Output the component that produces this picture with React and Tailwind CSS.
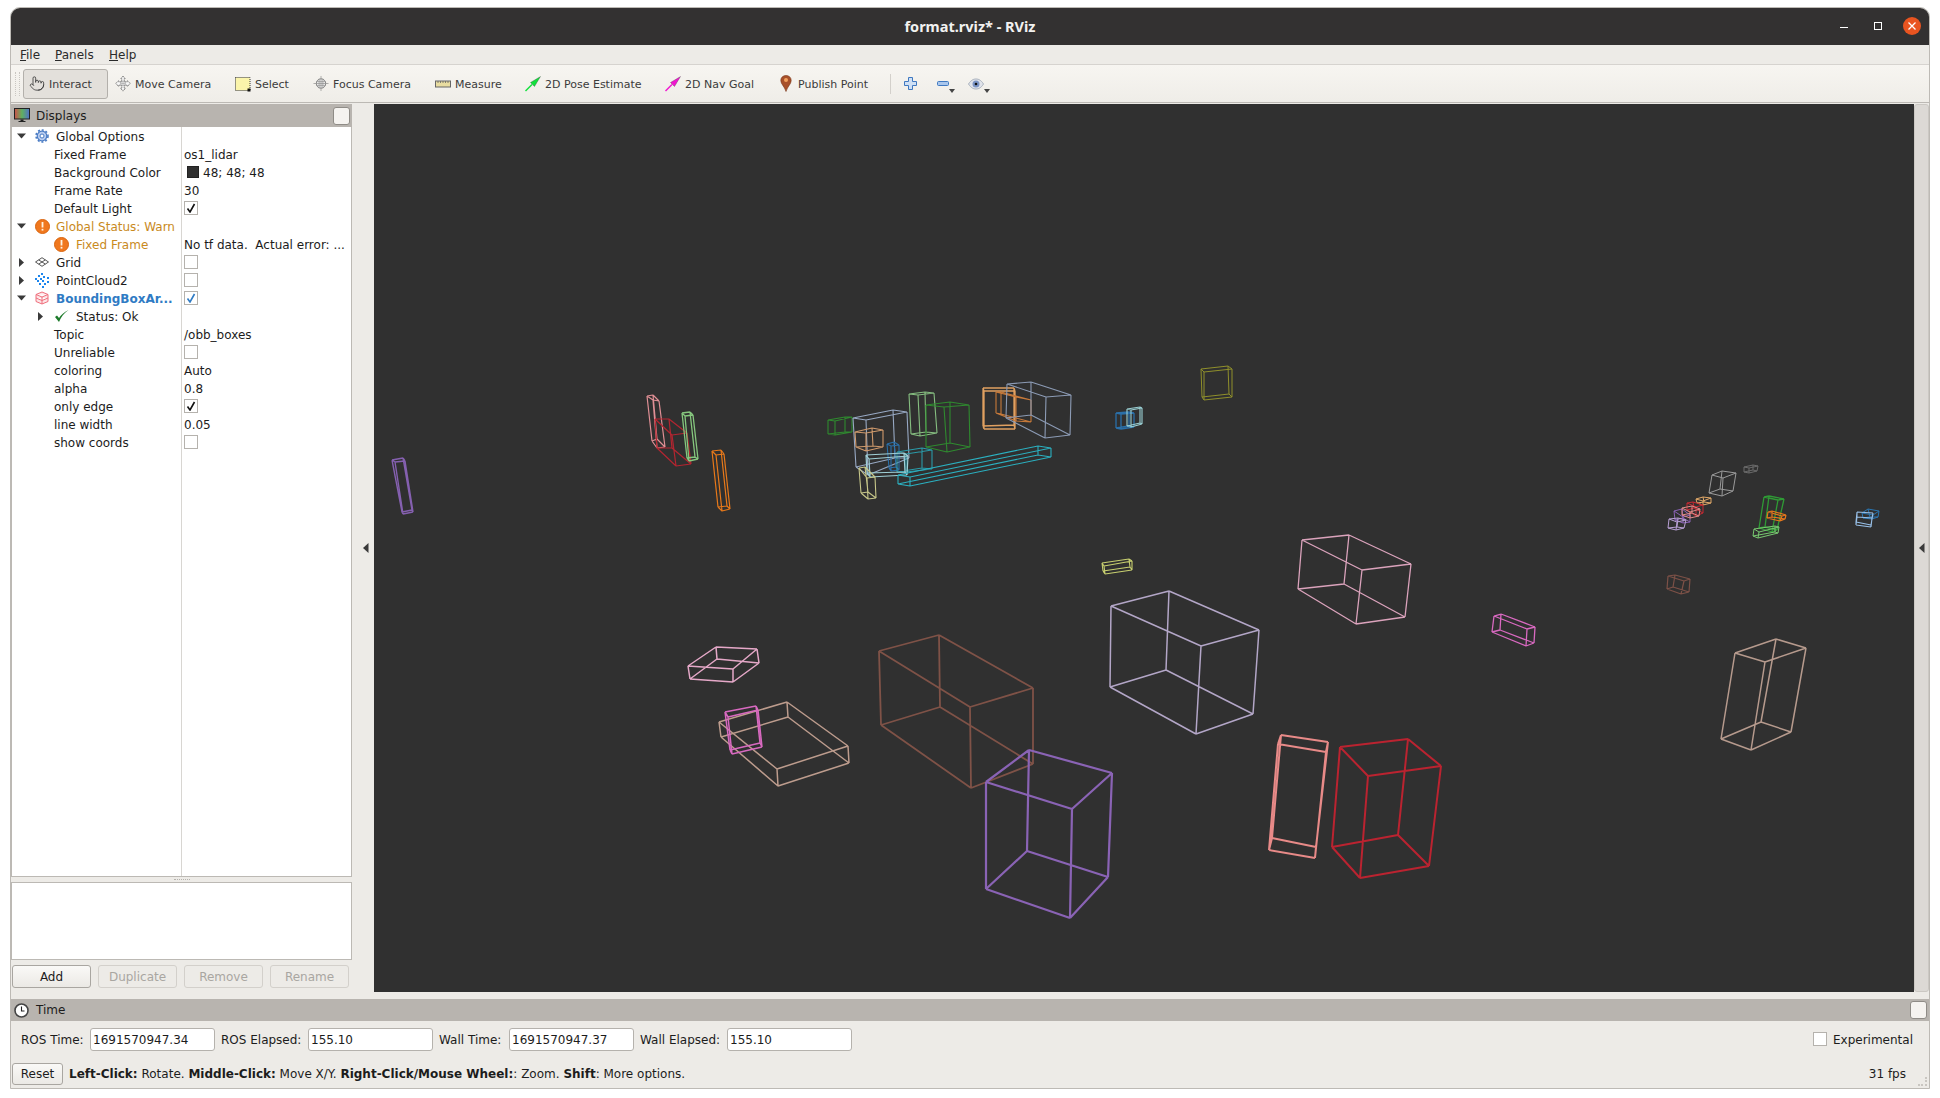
import { Pointer } from "lucide-react";

// wireframe boxes: colour, stroke, then top face and bottom face corners in page coordinates
const boxes = [
  ["#7f5247", 1.8, [879,651,939,635,1033,688,970,707], [881,725,940,707,1033,764,971,788]],
  ["#8a63b5", 2.2, [986,782,1029,750,1112,773,1072,809], [986,889,1027,851,1108,877,1070,918]],
  ["#b3a6c7", 1.5, [1111,606,1169,591,1259,630,1201,646], [1110,687,1166,670,1253,714,1196,734]],
  ["#e88a88", 2, [1281,735,1328,742,1326,752,1278,744], [1272,838,1316,847,1315,858,1269,850]],
  ["#bb2330", 2, [1340,747,1408,739,1441,766,1368,776], [1332,847,1398,835,1429,866,1360,878]],
  ["#e5a8c8", 1.5, [716,647,757,649,733,669,688,666], [717,659,759,663,733,682,690,679]],
  ["#bd9c8d", 1.5, [719,722,787,702,848,746,777,769], [721,737,788,717,849,763,778,786]],
  ["#d869c0", 1.5, [725,712,756,706,758,710,728,717], [730,750,760,743,762,747,732,754]],
  ["#dba3bc", 1.3, [1302,540,1349,535,1411,564,1362,570], [1298,589,1344,584,1405,617,1356,624]],
  ["#d869c0", 1.3, [1494,616,1501,614,1535,627,1527,629], [1492,632,1500,630,1534,643,1526,646]],
  ["#7d5147", 1.2, [1668,576,1675,575,1690,579,1684,581], [1667,589,1673,587,1689,592,1681,594]],
  ["#b69a8d", 1.5, [1735,653,1776,639,1806,648,1765,662], [1721,739,1761,722,1791,732,1751,750]],
  ["#e08f95", 1.2, [647,396,653,395,659,401,653,400], [652,441,657,439,665,447,657,448]],
  ["#b32530", 1.2, [655,419,669,419,687,433,672,435], [657,448,672,448,691,464,676,466]],
  ["#86c77e", 1.3, [682,413,690,412,693,415,685,416], [687,458,695,457,698,459,689,461]],
  ["#e8791a", 1.2, [712,451,721,450,724,454,716,455], [718,507,727,506,730,509,722,511]],
  ["#8560b0", 1.4, [392,460,403,458,405,461,395,462], [402,512,412,510,413,512,403,514]],
  ["#2f8a2f", 1.1, [828,420,845,417,852,417,835,421], [828,434,845,432,852,432,835,435]],
  ["#98a9c4", 1.1, [853,418,893,410,907,412,866,420], [856,467,895,458,909,458,868,475]],
  ["#d09a6c", 1.1, [855,432,872,428,883,430,866,433], [856,447,873,446,883,447,866,451]],
  ["#2a6fa8", 1.1, [887,444,894,442,899,445,891,446], [889,468,896,467,899,470,891,471]],
  ["#2b9aa8", 1.1, [897,452,922,448,932,450,906,454], [897,472,922,468,932,469,906,472]],
  ["#9fd0d6", 1.2, [866,455,904,453,908,456,869,459], [867,473,905,472,907,475,870,477]],
  ["#2bb0c0", 1.1, [898,475,1038,446,1051,448,910,477], [898,484,1038,455,1051,457,910,486]],
  ["#c8c88a", 1.1, [859,468,865,467,875,477,867,478], [861,493,868,492,876,498,868,499]],
  ["#86be80", 1.1, [909,394,925,392,934,393,918,395], [911,434,926,432,937,433,920,436]],
  ["#2f8a2f", 1.1, [926,405,950,402,969,405,944,407], [926,447,950,443,970,447,947,452]],
  ["#e0a060", 1.3, [983,388,1014,388,1015,391,984,391], [983,426,1014,425,1015,429,984,429]],
  ["#c87a3a", 1.1, [996,392,1001,392,1031,400,1016,397], [996,413,1001,414,1031,422,1016,421]],
  ["#8c9bb5", 1.1, [1007,384,1031,382,1071,395,1046,397], [1006,418,1031,415,1070,435,1045,438]],
  ["#2a6fa8", 1.3, [1116,413,1129,412,1134,413,1121,414], [1116,428,1129,426,1134,427,1121,429]],
  ["#9ad0d4", 1.1, [1127,409,1140,407,1142,408,1131,410], [1127,426,1140,423,1142,424,1131,427]],
  ["#8f8f2b", 1, [1201,369,1228,366,1232,369,1204,372], [1202,397,1229,394,1232,397,1204,400]],
  ["#c8d070", 1.1, [1102,563,1129,559,1132,561,1104,566], [1103,571,1130,567,1132,570,1105,574]],
  ["#9a9a9a", 1, [1712,475,1722,471,1736,473,1723,478], [1709,493,1720,489,1733,491,1722,496]],
  ["#6a6a6a", 1, [1744,467,1753,465,1758,466,1749,468], [1744,472,1753,470,1757,471,1749,473]],
  ["#e0a868", 1, [1696,499,1703,497,1711,498,1703,501], [1697,503,1704,502,1711,503,1703,505]],
  ["#8a62b5", 1, [1674,511,1682,509,1690,515,1683,517], [1675,520,1683,518,1690,522,1683,523]],
  ["#c62832", 1, [1687,503,1693,502,1703,505,1696,507], [1687,510,1694,508,1703,513,1696,516]],
  ["#e08a88", 1, [1682,508,1692,506,1700,509,1690,512], [1682,515,1692,513,1699,516,1690,518]],
  ["#b8a0d4", 1, [1669,519,1678,518,1686,520,1677,522], [1668,528,1677,527,1684,528,1676,530]],
  ["#2f9a35", 1.3, [1764,497,1769,496,1784,499,1778,500], [1759,528,1765,527,1777,530,1772,532]],
  ["#e8781c", 1.2, [1768,512,1772,511,1786,515,1782,516], [1767,518,1772,517,1785,519,1780,521]],
  ["#78c870", 1, [1754,529,1775,526,1779,527,1759,532], [1753,536,1775,532,1778,533,1758,538]],
  ["#2a75b0", 1, [1862,513,1868,509,1879,511,1873,515], [1863,518,1870,517,1878,517,1872,519]],
  ["#98c0e8", 1.1, [1857,512,1873,513,1872,518,1857,517], [1856,522,1871,525,1871,527,1856,525]],
];

function boxPath([t, b]) {
  const pt = (a, i) => `${a[i * 2]} ${a[i * 2 + 1]}`;
  let d = "";
  for (let i = 0; i < 4; i++) {
    const n = (i + 1) % 4;
    d += `M${pt(t, i)}L${pt(t, n)}M${pt(b, i)}L${pt(b, n)}M${pt(t, i)}L${pt(b, i)}`;
  }
  return d;
}

function Arrow({ open }) {
  if (open) {
    return (
      <svg width="11" height="8" viewBox="0 0 11 8">
        <path d="M1 1.500h9L5.500 6.500z" fill="#3a3a3a" />
      </svg>
    );
  }
  return (
    <svg width="11" height="11" viewBox="0 0 11 11">
      <path d="M3 1v9l5-4.500z" fill="#3a3a3a" />
    </svg>
  );
}

function Check({ blue }) {
  return (
    <div className="w-[14px] h-[14px] -mt-px border border-[#b5b2ad] bg-white flex items-center justify-center">
      {blue !== undefined && (
        <svg width="10" height="10" viewBox="0 0 10 10">
          <path d="M1.500 5.500 4 9 8.500 1" fill="none" stroke={blue ? "#2f7bc4" : "#111"} strokeWidth="1.600" />
        </svg>
      )}
    </div>
  );
}

function WarnIcon() {
  return (
    <svg width="15" height="15" viewBox="0 0 15 15">
      <circle cx="7.500" cy="7.500" r="7" fill="#f0781e" stroke="#d9650f" />
      <rect x="6.600" y="3" width="1.800" height="5.500" fill="#fff3e0" />
      <rect x="6.600" y="9.800" width="1.800" height="1.800" fill="#fff3e0" />
    </svg>
  );
}

function GearIcon() {
  return (
    <svg width="14" height="14" viewBox="0 0 14 14">
      <circle cx="7" cy="7" r="4.800" fill="#b9cdef" stroke="#4a7cc4" strokeWidth="1.200" />
      <circle cx="7" cy="7" r="6" fill="none" stroke="#4a7cc4" strokeWidth="1.600" strokeDasharray="2 1.900" />
      <circle cx="7" cy="7" r="2" fill="#fff" stroke="#4a7cc4" />
    </svg>
  );
}

function GridIcon() {
  return (
    <svg width="14" height="10" viewBox="0 0 14 10">
      <path d="M7 .7 13.500 5 7 9.300.5 5zM3.700 2.900 10.300 7.100M10.300 2.900 3.700 7.100" fill="none" stroke="#555" strokeWidth="1" />
    </svg>
  );
}

function CloudIcon() {
  const dots = [[6,0],[3,2],[8,3],[0,5],[5,5],[12,4],[2,7],[7,7],[12,8],[4,10],[9,10],[7,13]];
  return (
    <svg width="15" height="15" viewBox="0 0 15 15">
      {dots.map(([x, y]) => (
        <rect key={`${x}-${y}`} x={x} y={y} width="2" height="2" fill="#1c86ee" />
      ))}
    </svg>
  );
}

function BoxIcon() {
  return (
    <svg width="14" height="14" viewBox="0 0 14 14">
      <path d="M1 3.500 7 1l6 2.500v7L7 13l-6-2.500zM1 3.500 7 6l6-2.500M7 6v7M1 7l6 2.500L13 7" fill="#fde4e6" stroke="#ef6f7d" strokeWidth="1" />
    </svg>
  );
}

function Row({ name, nameCls = "text-[#1c1c1c]", pad = "pl-[42px]", icon, arrow, children }) {
  return (
    <div className="flex h-[18px]">
      <div className={`w-[170px] flex items-center border-r border-[#d8d6d2] whitespace-nowrap ${pad} ${nameCls}`}>
        {arrow}
        {icon}
        <span className="pt-px">{name}</span>
      </div>
      <div className="flex-1 pl-[2px] pt-px flex items-center whitespace-nowrap text-[#1c1c1c]">{children}</div>
    </div>
  );
}

function Top({ name, open, icon, nameCls, children }) {
  return (
    <Row
      name={name}
      nameCls={nameCls}
      pad="pl-[4px]"
      arrow={<div className="w-[11px] flex items-center justify-center"><Arrow open={open} /></div>}
      icon={<div className="w-[16px] ml-[7px] mr-[6px] flex items-center justify-center">{icon}</div>}
    >
      {children}
    </Row>
  );
}

function ToolButton({ w, label, icon, active }) {
  return (
    <div
      className={`${w} h-[30px] flex items-center gap-[4px] pl-[5px] shrink-0 text-[#3b3b3b] ${
        active ? "bg-[#e3e0db] border border-[#b3b0ab] rounded-[3px]" : ""
      }`}
    >
      <div className="w-[16px] h-[18px] flex items-center justify-center">{icon}</div>
      <span className="pt-[4px]">{label}</span>
    </div>
  );
}

const MoveIcon = (
  <svg width="17" height="17" viewBox="0 0 17 17">
    <path d="M8.500.7 11 3.400H9.800v3.300h3.300V5.500l3.200 3-3.200 3v-1.200H9.800v3.300H11l-2.500 3-2.500-3h1.200v-3.300H3.900v1.200L.7 8.500l3.200-3v1.200h3.300V3.400H6z" fill="#f6f6f6" stroke="#666" strokeWidth=".9" strokeDasharray="1.500 .6" />
    <path d="M6 6.500h5v4H6zM8.500 6.500v4M6 8.500h5" fill="none" stroke="#999" strokeWidth=".6" />
  </svg>
);
const SelectIcon = (
  <svg width="16" height="16" viewBox="0 0 16 16">
    <rect x=".5" y="1.500" width="14.500" height="13" fill="#fbf5ab" stroke="#333" strokeDasharray="1 1" />
    <rect x="12.500" y="12.500" width="3" height="3" fill="#111" />
  </svg>
);
const FocusIcon = (
  <svg width="17" height="17" viewBox="0 0 17 17">
    <circle cx="8.500" cy="8.500" r="5" fill="#f0f0f0" stroke="#777" strokeWidth=".9" />
    <path d="M8.500 .5v16M.5 8.500h16M3.500 6.500h10M3.500 10.500h10M6.500 3.500v10M10.500 3.500v10" fill="none" stroke="#8a8a8a" strokeWidth=".7" />
  </svg>
);
const MeasureIcon = (
  <svg width="16" height="8" viewBox="0 0 16 8">
    <rect x=".5" y="1" width="15" height="6" fill="#e8dca0" stroke="#666" />
    <path d="M3 1v2M5.500 1v2M8 1v2M10.500 1v2M13 1v2" stroke="#666" strokeWidth=".8" />
  </svg>
);
const diag = (c) => (
  <svg width="16" height="16" viewBox="0 0 16 16">
    <path d="M0.500 15 7 8.500" stroke={c} strokeWidth="1.500" />
    <path d="M15.500.5 9.500 10.500 7.500 8.500 5.500 6.500z" fill={c} stroke="#333" strokeWidth=".3" />
  </svg>
);
const PinIcon = (
  <svg width="12" height="17" viewBox="0 0 12 17">
    <path d="M6 .5C2.800.5.800 2.700.8 5.500c0 3.500 3.700 6 5.200 11 1.500-5 5.200-7.500 5.200-11C11.200 2.700 9.200.5 6 .5z" fill="#a8502a" stroke="#7a3a1e" strokeWidth=".6" />
    <circle cx="6" cy="5" r="2" fill="#f3a15e" />
  </svg>
);

function Caret() {
  return <div className="w-0 h-0 border-x-[3.500px] border-x-transparent border-t-[4px] border-t-[#444] self-end mb-[2px]" />;
}

function InlineField({ label, w, value }) {
  return (
    <>
      <span className={w}>{label}</span>
      <div className="w-[125px] h-[23px] mr-[6px] bg-white border border-[#b5b2ad] rounded-[3px] pl-[2px] flex items-center">{value}</div>
    </>
  );
}

function PanelButton({ label, disabled }) {
  return (
    <div
      className={`w-[79px] h-[23px] rounded-[3px] flex items-center justify-center ${
        disabled
          ? "border border-[#d3d0cb] text-[#a9a6a1]"
          : "border border-[#a9a6a1] bg-gradient-to-b from-[#faf9f7] to-[#ebe9e5] text-[#1c1c1c]"
      }`}
    >
      {label}
    </div>
  );
}

function FloatButton() {
  return <div className="w-[17px] h-[18px] bg-[#f5f3f0] border border-[#8f8c87] rounded-[3px]" />;
}

export default function App() {
  return (
    <div className="w-[1940px] h-[1098px] bg-white pt-[7px] pl-[10px] font-['DejaVu_Sans',sans-serif] text-[12px] overflow-hidden">
      <div className="box-border w-[1920px] h-[1082px] flex flex-col rounded-t-[10px] overflow-hidden border-x border-y border-[#bdbab5] bg-[#edebe7]">
        {/* title bar */}
        <div className="relative h-[37px] shrink-0 bg-[#333131] flex items-center justify-center">
          <span className="font-['Noto_Sans',sans-serif] font-bold text-[14.500px] text-[#f2f1f0]">format.rviz* - RViz</span>
          <div className="absolute left-[1829px] top-[19px] w-[8px] h-[1px] bg-white" />
          <div className="absolute left-[1863px] top-[14px] w-[8px] h-[8px] border border-white" />
          <div className="absolute left-[1892px] top-[9px] w-[18px] h-[18px] rounded-full bg-[#e95420] flex items-center justify-center">
            <svg width="8" height="8" viewBox="0 0 8 8">
              <path d="M.5.500 7.500 7.500M7.500.5.500 7.500" stroke="#fff" strokeWidth="1.300" />
            </svg>
          </div>
        </div>

        {/* menu */}
        <div className="h-[20px] shrink-0 flex items-center pl-[9px] border-b border-[#d6d3cf] text-[#2a2a2a]">
          <span className="w-[35px]"><span className="underline">F</span>ile</span>
          <span className="w-[54px]"><span className="underline">P</span>anels</span>
          <span><span className="underline">H</span>elp</span>
        </div>

        {/* toolbar */}
        <div className="h-[38px] shrink-0 flex items-center border-b border-[#bcb9b4] bg-gradient-to-b from-[#f7f5f1] to-[#efede8] text-[11px]">
          <div className="ml-[4px] mr-[3px] w-[5px] h-[24px] border-x border-dotted border-[#c9c6c1]" />
          <ToolButton w="w-[85px] mr-[2px]" label="Interact" active icon={<Pointer size={17} strokeWidth={1.200} color="#333" />} />
          <ToolButton w="w-[120px]" label="Move Camera" icon={MoveIcon} />
          <ToolButton w="w-[78px]" label="Select" icon={SelectIcon} />
          <ToolButton w="w-[122px]" label="Focus Camera" icon={FocusIcon} />
          <ToolButton w="w-[90px]" label="Measure" icon={MeasureIcon} />
          <ToolButton w="w-[140px]" label="2D Pose Estimate" icon={diag("#12e03c")} />
          <ToolButton w="w-[113px]" label="2D Nav Goal" icon={diag("#f016d0")} />
          <ToolButton w="w-[111px]" label="Publish Point" icon={PinIcon} />
          <div className="ml-[6px] w-px h-[20px] bg-[#d3d0cb]" />
          <div className="ml-[13px] w-[13px] h-[13px]">
            <svg width="13" height="13" viewBox="0 0 13 13">
              <path d="M4.500.5h4v4h4v4h-4v4h-4v-4h-4v-4h4z" fill="#cfe0f5" stroke="#3f78c0" />
            </svg>
          </div>
          <div className="ml-[20px] h-[22px] flex items-center">
            <svg width="12" height="5" viewBox="0 0 12 5">
              <rect x=".5" y=".5" width="11" height="4" rx="1" fill="#a9c6ec" stroke="#3f78c0" />
            </svg>
            <Caret />
          </div>
          <div className="ml-[13px] h-[22px] flex items-center">
            <svg width="16" height="12" viewBox="0 0 16 12">
              <path d="M.5 6C3 2 5.500 1 8 1s5 1 7.500 5C13 10 10.500 11 8 11S3 10 .5 6z" fill="#e0e3ea" stroke="#a8b0bd" />
              <circle cx="8" cy="6" r="3.500" fill="#7a93c4" />
              <circle cx="8" cy="6" r="1.300" fill="#111" />
            </svg>
            <Caret />
          </div>
        </div>

        {/* main row */}
        <div className="h-[890px] shrink-0 flex py-px">
          <div className="w-[341px] shrink-0 flex flex-col">
            <div className="h-[23px] shrink-0 bg-[#b8b4af] flex items-center text-[#1c1c1c] pl-[3px] pr-[2px]">
              <svg width="16" height="15" viewBox="0 0 16 15">
                <defs>
                  <linearGradient id="scr" x1="0" x2="1" y1="0" y2="0">
                    <stop offset="0" stopColor="#d0504a" />
                    <stop offset=".5" stopColor="#5fb060" />
                    <stop offset="1" stopColor="#5070c8" />
                  </linearGradient>
                </defs>
                <rect x=".5" y=".5" width="15" height="10.500" fill="url(#scr)" stroke="#222" />
                <path d="M6.500 11.500h3v1.500h2v1h-7v-1h2z" fill="#222" />
              </svg>
              <span className="ml-[6px] flex-1">Displays</span>
              <FloatButton />
            </div>
            <div className="flex-1 min-h-0 flex flex-col bg-white border-x border-b border-[#bcb9b4]">
              <Top name="Global Options" open icon={<GearIcon />} />
              <Row name="Fixed Frame">os1_lidar</Row>
              <Row name="Background Color">
                <div className="w-[12px] h-[12px] ml-[3px] mr-[4px] -mt-px bg-[#303030] border border-[#222]" />
                48; 48; 48
              </Row>
              <Row name="Frame Rate">30</Row>
              <Row name="Default Light"><Check blue={false} /></Row>
              <Top name="Global Status: Warn" open icon={<WarnIcon />} nameCls="text-[#c98a1d]" />
              <Row
                name="Fixed Frame"
                nameCls="text-[#c98a1d]"
                icon={<div className="mr-[7px] flex items-center"><WarnIcon /></div>}
              >
                No tf data.&nbsp; Actual error: ...
              </Row>
              <Top name="Grid" icon={<GridIcon />}><Check /></Top>
              <Top name="PointCloud2" icon={<CloudIcon />}><Check /></Top>
              <Top name="BoundingBoxAr..." open icon={<BoxIcon />} nameCls="text-[#2f7bc4] font-bold"><Check blue /></Top>
              <Row
                name="Status: Ok"
                pad="pl-[23px]"
                arrow={<div className="w-[11px] mr-[8px] flex items-center justify-center"><Arrow /></div>}
                icon={
                  <svg className="mr-[7px]" width="15" height="14" viewBox="0 0 15 14">
                    <path d="M1 8l4 5C7 8 10 4 14.500 1 10 3 7 6 5 9L3 6.500z" fill="#1c7a2a" />
                  </svg>
                }
              />
              <Row name="Topic">/obb_boxes</Row>
              <Row name="Unreliable"><Check /></Row>
              <Row name="coloring">Auto</Row>
              <Row name="alpha">0.8</Row>
              <Row name="only edge"><Check blue={false} /></Row>
              <Row name="line width">0.05</Row>
              <Row name="show coords"><Check /></Row>
              <div className="flex-1 w-[170px] border-r border-[#d8d6d2]" />
            </div>
            <div className="h-[5px] shrink-0 flex items-center justify-center">
              <div className="w-[16px] border-t border-dotted border-[#b5b2ad]" />
            </div>
            <div className="h-[78px] shrink-0 bg-white border border-[#bcb9b4]" />
            <div className="mt-[5px] mb-[4px] h-[23px] shrink-0 flex gap-[7px] pl-[1px]">
              <PanelButton label="Add" />
              <PanelButton label="Duplicate" disabled />
              <PanelButton label="Remove" disabled />
              <PanelButton label="Rename" disabled />
            </div>
          </div>

          {/* left collapse handle */}
          <div className="w-[22px] shrink-0 flex items-center justify-end pr-[5px]">
            <svg width="6" height="10" viewBox="0 0 6 10">
              <path d="M5.500 0v10L0 5z" fill="#3a3a3a" />
            </svg>
          </div>

          {/* 3D view */}
          <div className="flex-1 min-w-0 bg-[#303030]">
            <svg className="block w-full h-full" viewBox="374 104 1540 888" fill="none">
              {boxes.map(([color, sw, t, b], i) => (
                <path key={i} d={boxPath([t, b])} stroke={color} strokeWidth={sw} strokeLinejoin="round" />
              ))}
            </svg>
          </div>

          {/* right collapse handle */}
          <div className="w-[15px] shrink-0 bg-[#dcd9d5] border border-[#cbc8c3] rounded-[3px] flex items-center justify-center">
            <svg width="6" height="10" viewBox="0 0 6 10">
              <path d="M5.500 0v10L0 5z" fill="#3a3a3a" />
            </svg>
          </div>
        </div>

        <div className="h-[6px] shrink-0" />

        {/* time panel */}
        <div className="flex-1 min-h-0 flex flex-col text-[#1c1c1c]">
          <div className="h-[22px] shrink-0 bg-[#b8b4af] flex items-center pl-[3px] pr-[2px]">
            <svg width="15" height="15" viewBox="0 0 15 15">
              <circle cx="7.500" cy="7.500" r="6.500" fill="#fff" stroke="#444" strokeWidth="1.600" />
              <path d="M7.500 3.500v4.500h3" fill="none" stroke="#222" strokeWidth="1.100" />
            </svg>
            <span className="ml-[7px] flex-1">Time</span>
            <FloatButton />
          </div>
          <div className="mt-[7px] h-[23px] shrink-0 flex items-center pl-[10px] pr-[16px]">
            <InlineField label="ROS Time:" w="w-[69px]" value="1691570947.34" />
            <InlineField label="ROS Elapsed:" w="w-[87px]" value="155.10" />
            <InlineField label="Wall Time:" w="w-[70px]" value="1691570947.37" />
            <InlineField label="Wall Elapsed:" w="w-[87px]" value="155.10" />
            <div className="ml-auto flex items-center gap-[6px]">
              <Check />
              <span>Experimental</span>
            </div>
          </div>
          <div className="relative mt-[12px] h-[21px] shrink-0 flex items-center pl-[1px]">
            <div className="w-[51px] h-[22px] border border-[#a9a6a1] rounded-[3px] bg-gradient-to-b from-[#faf9f7] to-[#ebe9e5] flex items-center justify-center">
              Reset
            </div>
            <span className="ml-[6px] whitespace-pre">
              <b>Left-Click:</b> Rotate. <b>Middle-Click:</b> Move X/Y. <b>Right-Click/Mouse Wheel:</b>: Zoom. <b>Shift</b>: More options.
            </span>
            <span className="ml-auto mr-[23px]">31 fps</span>
            <div className="absolute right-[2px] bottom-[-2px] w-[9px] h-[9px] border-b-2 border-r-2 border-dotted border-[#c9c6c1]" />
          </div>
        </div>
      </div>
    </div>
  );
}
